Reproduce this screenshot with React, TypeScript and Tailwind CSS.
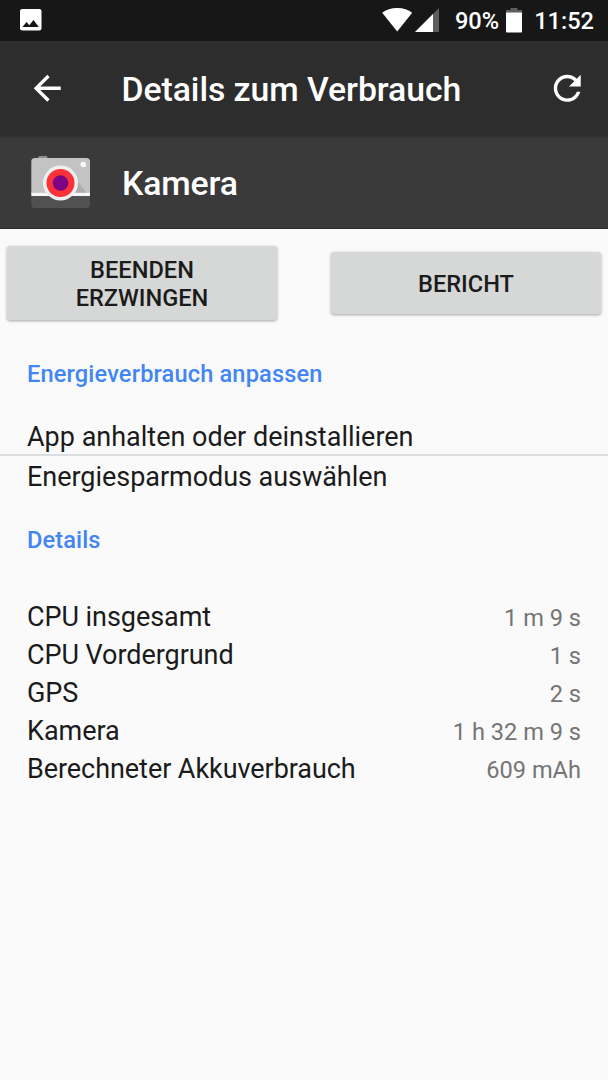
import React from 'react'

interface DetailRow {
  label: string
  value: string
}

const details: DetailRow[] = [
  { label: 'CPU insgesamt', value: '1 m 9 s' },
  { label: 'CPU Vordergrund', value: '1 s' },
  { label: 'GPS', value: '2 s' },
  { label: 'Kamera', value: '1 h 32 m 9 s' },
  { label: 'Berechneter Akkuverbrauch', value: '609 mAh' },
]

const CameraIcon = () => (
  <svg className="block h-[56px] w-[64px]" viewBox="0 0 64 56">
    <defs>
      <clipPath id="body">
        <rect x="2.3" y="4" width="58.7" height="50" rx="3.5" />
      </clipPath>
    </defs>
    <rect x="9.3" y="2" width="9" height="4" rx="1" fill="#8e8e8e" />
    <g clipPath="url(#body)">
      <rect x="2" y="4" width="60" height="36" fill="#c3c3c3" />
      <path d="M44 21 57.500 39H38z" fill="#adadad" />
      <rect x="2" y="38.800" width="60" height="3.400" fill="#f7f7f7" />
      <rect x="2" y="42.200" width="60" height="12" fill="#515151" />
    </g>
    <circle cx="54.300" cy="10.500" r="2.800" fill="#fafafa" />
    <circle cx="31.500" cy="29" r="17.500" fill="#efefef" />
    <circle cx="31.500" cy="29" r="14" fill="#fb3237" />
    <circle cx="31.500" cy="29" r="7.800" fill="#7d0583" />
  </svg>
)

const StatusBar = () => (
  <div className="flex h-[41px] items-center bg-[#171717] pl-5 pr-[14px] text-white">
    <svg className="-mt-px block h-[22px] w-[22px]" viewBox="0 0 22 22">
      <rect width="21.500" height="21.500" rx="2.200" fill="#fff" />
      <path d="M2.500 18 6.500 13l2.800 3.300 4.200-5.300 5.300 7z" fill="#171717" />
    </svg>
    <div className="ml-auto flex items-center text-[23.6px] font-medium leading-[41px]">
      <svg className="mr-[15px] -mt-px block h-[24px] w-[58px]" viewBox="0 0 58 24">
        <path d="M0.200 4.800C4 1.600 9.200 0 15.200 0s11.200 1.600 15 4.800L15.200 23.500z" fill="#fff" />
        <path d="M57 0v24H33z" fill="#5d5d5d" />
        <path d="M51 6v18H33z" fill="#fff" />
      </svg>
      <span className="pt-[2px] leading-[39px]">90%</span>
      <svg className="ml-[7px] mr-[12px] block h-[25px] w-[16px]" viewBox="0 0 16 25">
        <path d="M4.500 0h7v2H16v4H0V2h4.500z" fill="#5d5d5d" />
        <path d="M0 4.500h16V23.500a1 1 0 0 1-1 1H1a1 1 0 0 1-1-1z" fill="#fff" />
      </svg>
      <span className="pt-[2px] leading-[39px]">11:52</span>
    </div>
  </div>
)

const Toolbar = () => (
  <header className="flex h-[95px] items-center bg-[#2d2d2d] pl-[27px] pr-[21px] text-white">
    <svg className="block h-[40.5px] w-[40.5px]" viewBox="0 0 24 24" fill="currentColor">
      <path d="M20 11H7.830l5.590-5.590L12 4l-8 8 8 8 1.410-1.410L7.830 13H20v-2z" />
    </svg>
    <h1 className="ml-[54px] pt-[2px] text-[33.8px] font-medium leading-none tracking-[-0.07px]">
      Details zum Verbrauch
    </h1>
    <svg className="ml-auto block h-[40.5px] w-[40.5px]" viewBox="0 0 24 24" fill="currentColor">
      <path d="M17.650 6.350C16.200 4.900 14.210 4 12 4c-4.420 0-7.990 3.580-7.990 8s3.570 8 7.990 8c3.730 0 6.840-2.550 7.730-6h-2.080c-.82 2.330-3.040 4-5.650 4-3.310 0-6-2.690-6-6s2.690-6 6-6c1.660 0 3.140.69 4.220 1.780L13 11h7V4l-2.350 2.350z" />
    </svg>
  </header>
)

const App: React.FC = () => {
  return (
    <div className="flex h-[1080px] w-[608px] flex-col overflow-hidden bg-[#fafafa] font-['Roboto',sans-serif] text-[#1b1b1b]">
      <StatusBar />
      <Toolbar />

      {/* App entry */}
      <div className="flex h-[93px] items-center border-b border-[#2c2c2c] bg-[#3a3a3a] pl-[29px] text-white shadow-[inset_0_3px_3px_-3px_rgba(0,0,0,0.4)]">
        <CameraIcon />
        <h2 className="ml-[29px] pt-[3px] text-[33.8px] font-medium leading-none tracking-[-0.15px]">Kamera</h2>
      </div>

      {/* Actions */}
      <div className="flex h-[108px] items-center justify-between px-[7px]">
        <button className="h-[74px] w-[270px] rounded-[3px] bg-[#d6d8d7] px-14 pt-[3px] text-[23.6px] font-medium leading-[27.7px] shadow-[0_1px_3px_rgba(0,0,0,0.35)]">
          BEENDEN ERZWINGEN
        </button>
        <button className="h-[62px] w-[270px] rounded-[3px] bg-[#d6d8d7] pt-[3px] text-[23.6px] font-medium leading-[27.7px] shadow-[0_1px_3px_rgba(0,0,0,0.35)]">
          BERICHT
        </button>
      </div>

      {/* Energy settings */}
      <h3 className="mt-[23px] px-[27px] text-[23.6px] font-medium leading-[28px] tracking-[0.15px] text-[#4285f4]">
        Energieverbrauch anpassen
      </h3>
      <div className="mt-[30px] h-[38px] border-b-2 border-[#dcdddf] px-[27px] text-[27px] leading-[38px]">
        App anhalten oder deinstallieren
      </div>
      <div className="h-[42px] px-[27px] text-[27px] leading-[42px] tracking-[-0.04px]">Energiesparmodus auswählen</div>

      {/* Usage details */}
      <h3 className="mt-[28px] px-[27px] text-[23.6px] font-medium leading-[28px] tracking-[0.1px] text-[#4285f4]">
        Details
      </h3>
      <dl className="mt-[43.7px] px-[27px]">
        {details.map((row) => (
          <div key={row.label} className="flex h-[38.2px] items-baseline justify-between leading-[38.2px]">
            <dt className="text-[27px] tracking-[-0.06px]">{row.label}</dt>
            <dd className="text-[23.6px] text-[#757575]">{row.value}</dd>
          </div>
        ))}
      </dl>
    </div>
  )
}

export default App
